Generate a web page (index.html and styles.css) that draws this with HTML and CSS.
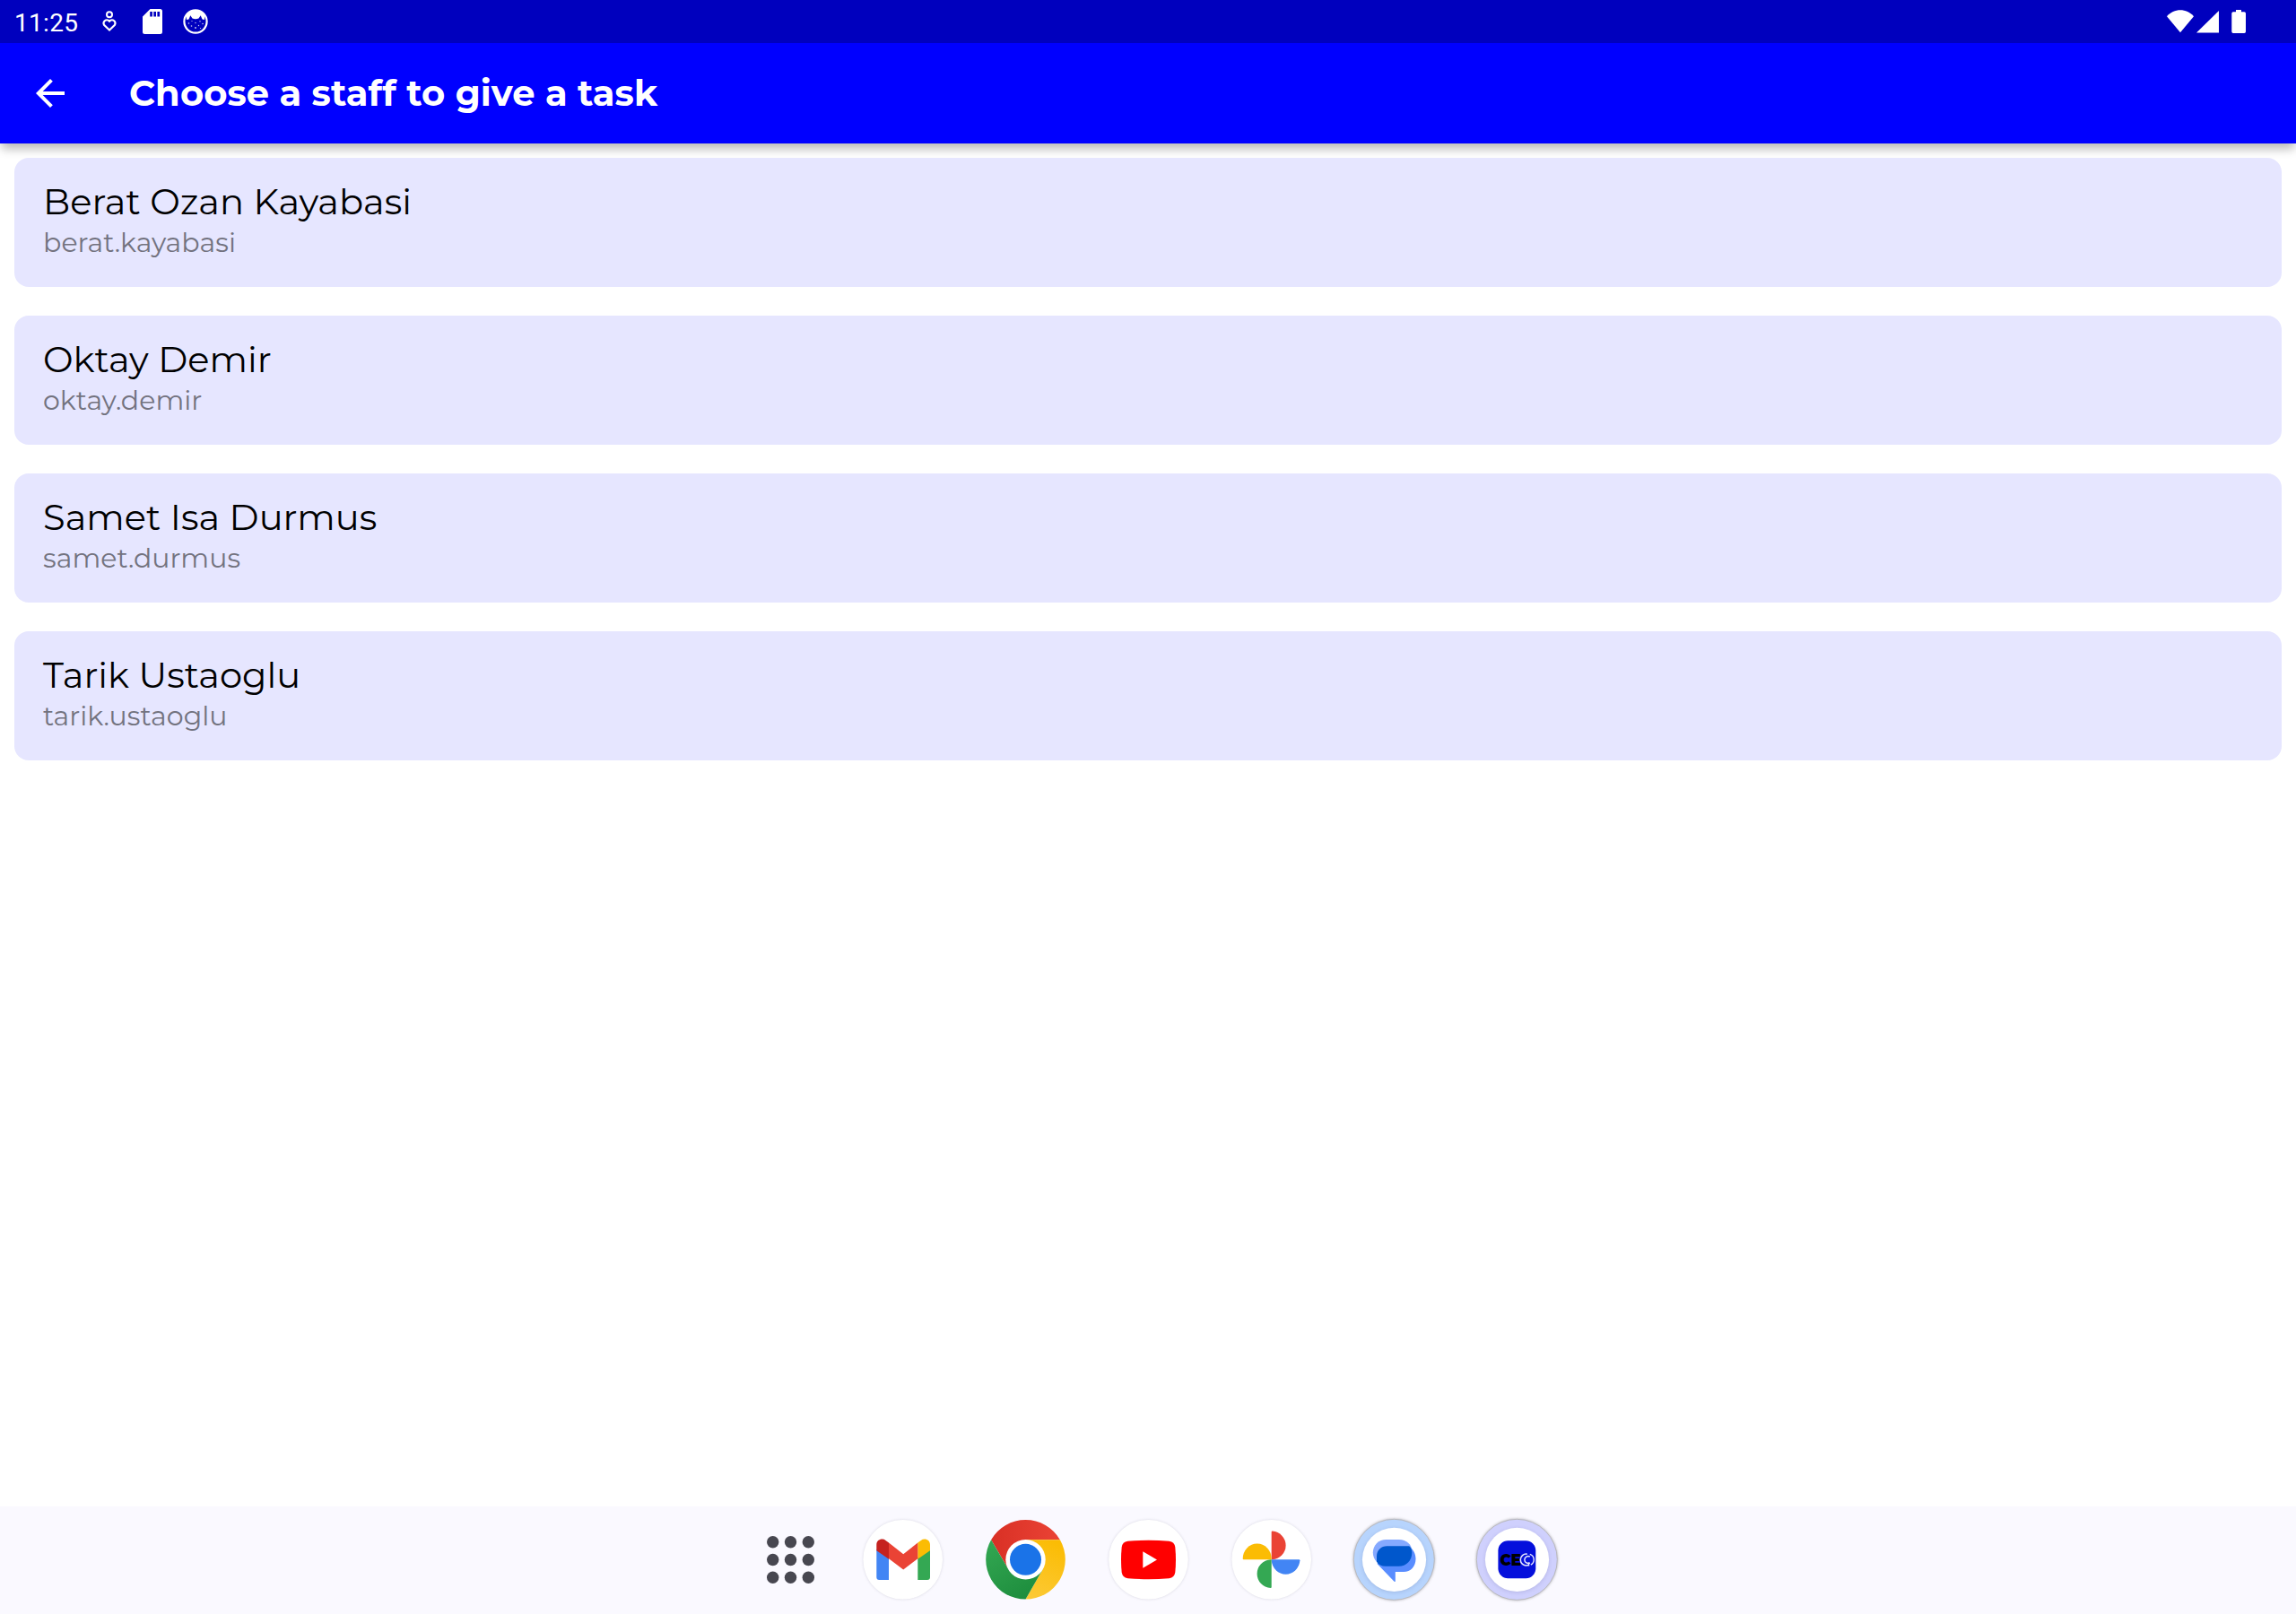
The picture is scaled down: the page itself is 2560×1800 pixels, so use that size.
FILE: index.html
```html
<!DOCTYPE html>
<html lang="en">
<head>
<meta charset="utf-8">
<title>Choose a staff to give a task</title>
<link rel="stylesheet" href="styles.css">
</head>
<body>
<div class="screen">
  <header class="status-bar">
    <span class="clock">11:25</span>
    <svg class="notifications" width="130" height="48" viewBox="104 0 130 48">
      <circle cx="122" cy="16.3" r="3" fill="none" stroke="#fff" stroke-width="2"/>
      <path d="M122 33.600l-6-5.800a3.700 3.700 0 0 1 5.200-4.900l.8.8.8-.8a3.700 3.700 0 0 1 5.200 4.900z" fill="none" stroke="#fff" stroke-width="2.100"/>
      <path fill="#fff" fill-rule="evenodd" d="M167.500 10H178.500a2.500 2.500 0 0 1 2.500 2.500V35.500a2.500 2.500 0 0 1-2.500 2.500H161.500a2.500 2.500 0 0 1-2.500-2.500V18.500zM167.200 13v5.500h2.700V13zM171.300 13v5.500h2.700V13zM175.400 13v5.500h2.700V13z"/>
      <circle cx="218" cy="24" r="12.600" fill="none" stroke="#fff" stroke-width="2.200"/>
      <path fill="#fff" d="M207.500 17.500C210 13 214 11.500 218 11.500s8 1.500 10.500 6l-.5 4.500-2.500-.5-1.800-4.200-2.200 3.200q-3.500 1.400-7 0l-2.200-3.200-1.800 4.200-2.500.5z"/>
      <g fill="#fff" fill-opacity=".8"><circle cx="210.500" cy="26" r=".8"/><circle cx="214" cy="23.500" r=".6"/><circle cx="213.500" cy="29" r=".8"/><circle cx="218" cy="25.500" r=".7"/><circle cx="218" cy="31" r=".9"/><circle cx="221.500" cy="28.500" r=".7"/><circle cx="223" cy="23.800" r=".7"/><circle cx="226" cy="26.500" r=".8"/><circle cx="223.500" cy="31.500" r=".6"/></g>
    </svg>
    <svg class="system" width="100" height="48" viewBox="2410 0 100 48" fill="#fff">
      <path d="M2431 36.300L2416 18.300C2420 13.600 2425.500 11.300 2431 11.300S2442 13.600 2446 18.300z"/>
      <path d="M2474 12V36.600H2449z"/>
      <path d="M2493 11h6v2.300h3.300a1.700 1.700 0 0 1 1.700 1.700V35.300a1.700 1.700 0 0 1-1.700 1.700H2490a1.700 1.700 0 0 1-1.700-1.700V15a1.700 1.700 0 0 1 1.700-1.700h3z"/>
    </svg>
  </header>

  <div class="app-bar">
    <svg class="back" width="48" height="48" viewBox="0 0 24 24"><path fill="#fff" d="M20 11H7.830l5.590-5.590L12 4l-8 8 8 8 1.410-1.410L7.830 13H20z"/></svg>
    <h1 class="title">Choose a staff to give a task</h1>
  </div>

  <main class="staff-list">
    <div class="card"><div class="name">Berat Ozan Kayabasi</div><div class="user">berat.kayabasi</div></div>
    <div class="card"><div class="name">Oktay Demir</div><div class="user">oktay.demir</div></div>
    <div class="card"><div class="name">Samet Isa Durmus</div><div class="user">samet.durmus</div></div>
    <div class="card"><div class="name">Tarik Ustaoglu</div><div class="user">tarik.ustaoglu</div></div>
  </main>

  <nav class="dock">
    <svg class="apps" width="54" height="54" viewBox="0 0 54 54" fill="#474750">
      <circle cx="6.700" cy="6.700" r="6.700"/><circle cx="26.500" cy="6.700" r="6.700"/><circle cx="46.300" cy="6.700" r="6.700"/>
      <circle cx="6.700" cy="26.500" r="6.700"/><circle cx="26.500" cy="26.500" r="6.700"/><circle cx="46.300" cy="26.500" r="6.700"/>
      <circle cx="6.700" cy="46.300" r="6.700"/><circle cx="26.500" cy="46.300" r="6.700"/><circle cx="46.300" cy="46.300" r="6.700"/>
    </svg>

    <svg class="icon" viewBox="0 0 96 96">
      <circle class="disc" cx="47.700" cy="47.300" r="44.300"/>
      <path fill="#4285f4" d="M18.300 36v31a3 3 0 0 0 3 3H32V45z"/>
      <path fill="#34a853" d="M78 36v31a3 3 0 0 1-3 3H64.300V45z"/>
      <path fill="#c5221f" d="M18.300 37.300v-6.500c0-6 6.300-7.800 10.200-4.900L32 28.500V46.800z"/>
      <path fill="#fbbc04" d="M78 37.300v-6.500c0-6-6.300-7.800-10.200-4.900L64.300 28.500V46.800z"/>
      <path fill="#ea4335" d="M32 28.500l16.200 12.800L64.300 28.500V46.300L48.200 58.500 32 46.300z"/>
    </svg>

    <svg class="icon" viewBox="0 0 96 96">
      <defs>
        <linearGradient id="red"><stop offset="0" stop-color="#d93025"/><stop offset="1" stop-color="#ea4335"/></linearGradient>
        <linearGradient id="green" x1="0" y1="0" x2=".6" y2="1"><stop offset="0" stop-color="#34a853"/><stop offset="1" stop-color="#1e8e3e"/></linearGradient>
        <linearGradient id="yellow" x1=".6" y1="0" x2=".3" y2="1"><stop offset="0" stop-color="#fbbc04"/><stop offset="1" stop-color="#fcc934"/></linearGradient>
      </defs>
      <path fill="url(#red)" d="M9.100 25.200A44.300 44.300 0 0 1 85.900 25.200H47.500L28.400 58.300z"/>
      <path fill="url(#yellow)" d="M85.900 25.200A44.300 44.300 0 0 1 47.500 91.600L66.600 58.300 47.500 25.200z"/>
      <path fill="url(#green)" d="M47.500 91.600A44.300 44.300 0 0 1 9.100 25.200L28.400 58.300 66.600 58.300z"/>
      <circle cx="47.500" cy="47.300" r="22.200" fill="#fff"/>
      <circle cx="47.500" cy="47.300" r="17.500" fill="#1a73e8"/>
    </svg>

    <svg class="icon" viewBox="0 0 96 96">
      <circle class="disc" cx="47.500" cy="47.300" r="44.300"/>
      <path fill="#f00" d="M24.500 26.800Q47.500 24.800 70.500 26.800Q76.500 27.500 77.300 33.500Q78.700 47.500 77.300 61.500Q76.500 67.500 70.500 68.200Q47.500 70.200 24.500 68.200Q18.500 67.500 17.700 61.500Q16.300 47.500 17.700 33.500Q18.500 27.500 24.500 26.800z"/>
      <path fill="#fff" d="M41.300 38.300L57 47.500 41.300 56.700z"/>
    </svg>

    <svg class="icon" viewBox="0 0 96 96">
      <circle class="disc" cx="47.700" cy="47.300" r="44.300"/>
      <path fill="#ea4335" d="M47.700 47.300V16.600q0-1 1-1A16.200 15.900 0 0 1 48.700 47.300z"/>
      <path fill="#4285f4" d="M47.700 47.300H78.400q1 0 1 1A15.900 16.700 0 0 1 47.700 48.300z"/>
      <path fill="#34a853" d="M47.700 47.300V78q0 1-1 1A16.400 15.900 0 0 1 46.700 47.300z"/>
      <path fill="#fbbc04" d="M47.700 47.300H16.700q-1 0-1-1A15.900 16.700 0 0 1 47.700 46.300z"/>
    </svg>

    <svg class="icon" viewBox="0 0 96 96">
      <circle class="ring ring-blue" cx="47.300" cy="47.300" r="45"/>
      <circle class="inner" cx="47.500" cy="47.300" r="35.600"/>
      <path fill="#598dff" d="M65.500 33.500C69.200 36.800 71.500 41.500 71.500 46.500 71.500 55 66 61 58 61H48.800V71.300q0 1.400-1.300.4L28.500 52 40 34z"/>
      <path fill="#85a9ff" d="M38.500 25H53C61 25 67.300 30.500 67.300 38L50 54 28 50C25.500 47 23.800 43.500 23.800 39.500 23.800 31 30.500 25 38.500 25z"/>
      <path fill="#0057cc" d="M39.500 32.300H64.200C66 33.800 67.300 36 67.300 39.500 67.300 48.500 61 54.800 52.500 54.800H38C33.500 54.800 30 53 28 49.700V43.500C28 37 33 32.300 39.500 32.300z"/>
    </svg>

    <svg class="icon" viewBox="0 0 96 96">
      <circle class="ring ring-violet" cx="47.300" cy="47.300" r="45"/>
      <circle class="inner" cx="47.500" cy="47.300" r="35.600"/>
      <rect x="26.400" y="26.300" width="41.900" height="42" rx="11" fill="#0510dc"/>
      <text class="logo-text" x="28.600" y="54" textLength="23.500" lengthAdjust="spacingAndGlyphs">CE</text>
      <g fill="none" stroke="#e6e8ff">
        <path stroke-width="1.500" d="M58.800 41.200A6.400 6.400 0 1 0 58.800 53.800H60.500V50.500"/>
        <path stroke-width="1.500" d="M61.800 44A4 4 0 1 0 61.800 51"/>
        <path stroke-width="1.400" d="M61.800 41.300A6.500 6.500 0 0 1 62.800 53.200"/>
      </g>
    </svg>
  </nav>
</div>
</body>
</html>
```

FILE: styles.css
```css
* { box-sizing: border-box; }
body { margin: 0; background: #fff; font-family: Montserrat, Inter, sans-serif; }
.screen { width: 2560px; height: 1800px; display: flex; flex-direction: column; overflow: hidden; }

.status-bar { height: 48px; background: #0000be; display: flex; align-items: center; padding: 0 50px 0 16px; }
.clock { width: 88px; color: #fff; font: 28px/48px Roboto, sans-serif; letter-spacing: .3px; padding-top: 3px; }
.system { margin-left: auto; }

.app-bar {
  height: 112px; background: #00f; display: flex; align-items: center; padding-left: 32px;
  box-shadow: 0 8px 10px -2px rgba(0, 0, 0, .28);
}
.title { margin: 0 0 0 64px; color: #fff; font-size: 40px; font-weight: 700; line-height: 48px; letter-spacing: .07px; white-space: nowrap; }

.staff-list { flex: 1; display: flex; flex-direction: column; gap: 32px; padding: 16px; }
.card { height: 144px; padding: 24px 32px; border-radius: 16px; background: #e6e6ff; }
.name { font-size: 40px; line-height: 50px; letter-spacing: .04px; color: #000; }
.user { margin-top: 2px; font-size: 30px; line-height: 38px; letter-spacing: .04px; color: #73737f; }

.dock { height: 120px; background: #faf9ff; display: flex; align-items: center; gap: 41px; padding-left: 855px; }
.apps { margin-right: 9px; }
.icon { width: 96px; height: 96px; overflow: visible; }
.disc { fill: #fff; filter: drop-shadow(0 0 1.5px rgba(0, 0, 40, .14)); }
.ring { stroke: #b9b9bd; stroke-width: 1px; filter: drop-shadow(0 0 1.5px rgba(0, 0, 0, .3)); }
.ring-blue { fill: #b7d4fd; }
.ring-violet { fill: #cfd0fd; }
.inner { fill: #fff; filter: drop-shadow(0 1px 2px rgba(0, 0, 60, .12)); }
.logo-text { font: 900 18px Montserrat, sans-serif; fill: #000; }
```
